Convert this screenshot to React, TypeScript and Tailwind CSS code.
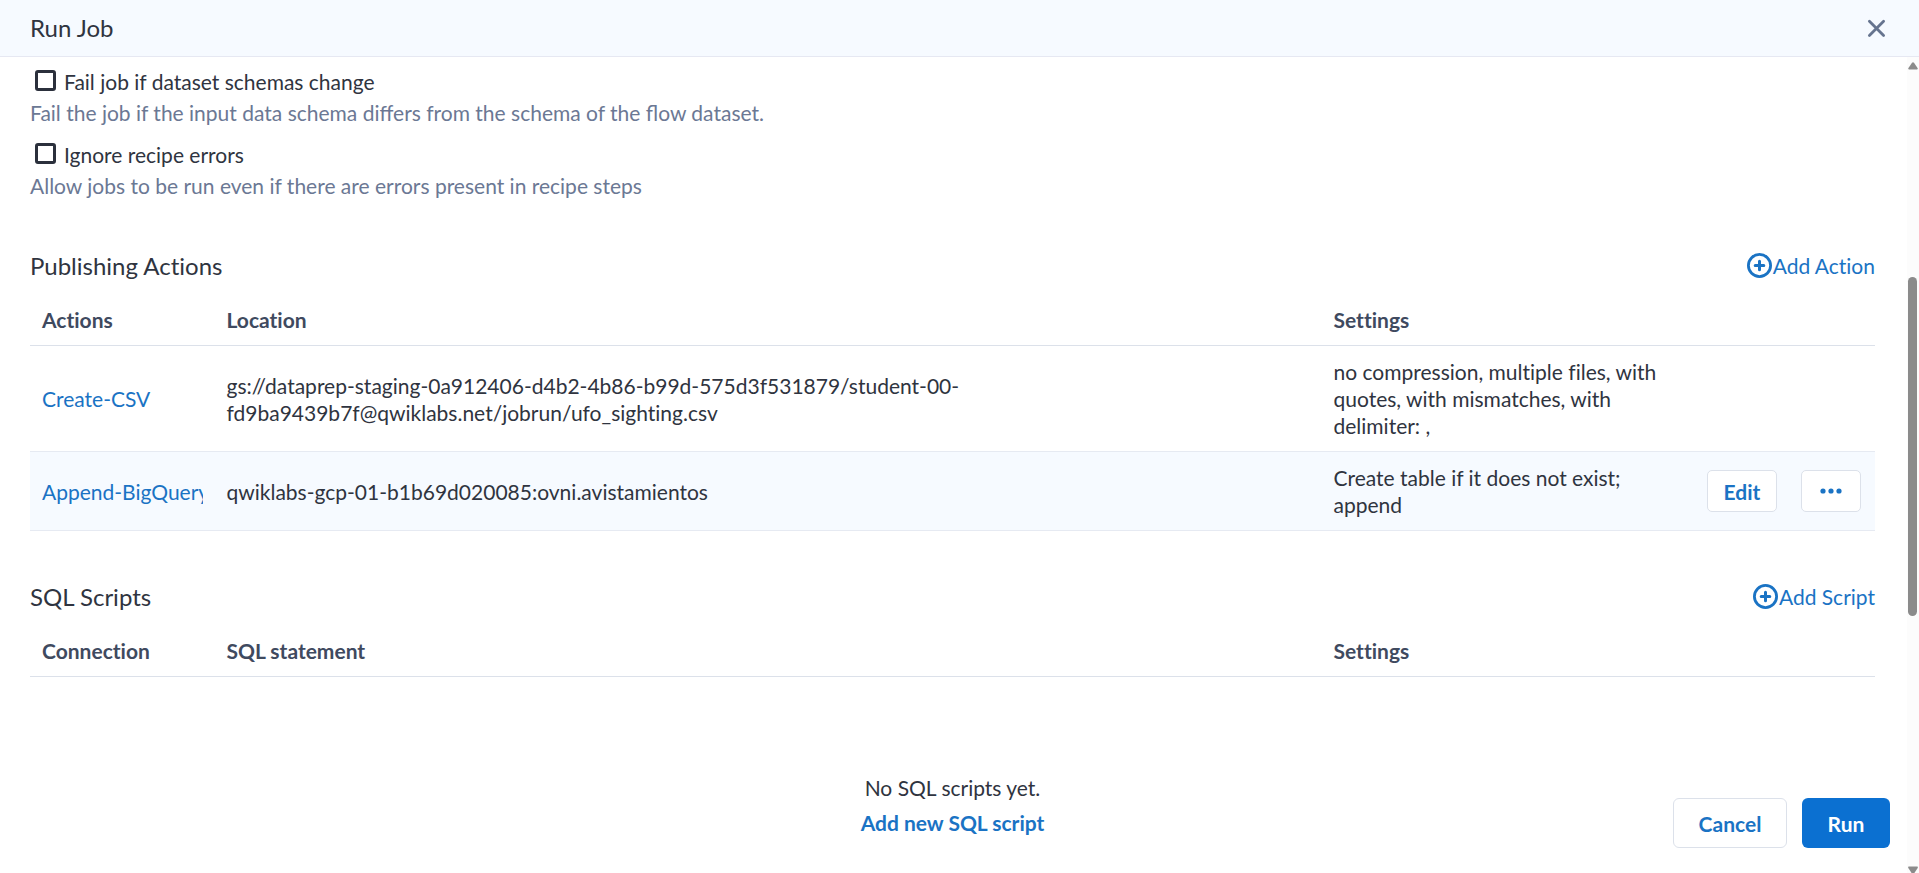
import type { ReactNode } from "react";

const actions = [
  {
    name: "Create-CSV",
    location:
      "gs://dataprep-staging-0a912406-d4b2-4b86-b99d-575d3f531879/student-00-fd9ba9439b7f@qwiklabs.net/jobrun/ufo_sighting.csv",
    settings: "no compression, multiple files, with quotes, with mismatches, with delimiter: ,",
    active: false,
  },
  {
    name: "Append-BigQuery",
    location: "qwiklabs-gcp-01-b1b69d020085:ovni.avistamientos",
    settings: "Create table if it does not exist; append",
    active: true,
  },
];

function Option({ id, label, hint }: { id: string; label: string; hint: string }) {
  return (
    <div>
      <div className="flex items-start gap-2 pl-[5px]">
        <input
          id={id}
          type="checkbox"
          aria-describedby={`${id}-hint`}
          className="mt-0.5 size-[21px] shrink-0 appearance-none rounded-[3px] border-3 border-[#2b303c] bg-white checked:bg-[#2b303c]"
        />
        <label htmlFor={id}>{label}</label>
      </div>
      <p id={`${id}-hint`} className="mt-1 text-[#6b7894] [font-variant-ligatures:common-ligatures]">
        {hint}
      </p>
    </div>
  );
}

function SectionHeader({ title, action }: { title: string; action: string }) {
  return (
    <div className="flex items-center justify-between">
      <h2 className="text-2xl">{title}</h2>
      <button type="button" className="flex items-center gap-px pb-0.5 text-[#1a73c4]">
        <svg viewBox="0 0 25 25" className="size-[25px]" fill="none" stroke="currentColor" aria-hidden="true">
          <circle cx="12.5" cy="12.5" r="11.1" strokeWidth="2.8" />
          <path d="M12.5 8.2v8.6M8.2 12.5h8.6" strokeWidth="3" strokeLinecap="round" />
        </svg>
        {action}
      </button>
    </div>
  );
}

function DataTable({ heads, children }: { heads: string[]; children?: ReactNode }) {
  return (
    <table className="mt-3 w-full table-fixed border-collapse text-left">
      <colgroup>
        <col className="w-[10%]" />
        <col className="w-[60%]" />
        <col className="w-[20%]" />
        <col className="w-[10%]" />
      </colgroup>
      <thead>
        <tr className="border-b border-[#dce1ea] text-[#3f4a5f]">
          {heads.map((head) => (
            <th key={head} scope="col" className="p-3 font-bold">
              {head}
            </th>
          ))}
          <td />
        </tr>
      </thead>
      <tbody>{children}</tbody>
    </table>
  );
}

export default function App() {
  return (
    <div className="flex h-screen flex-col overflow-hidden bg-white font-['Lato',sans-serif] text-[21px] leading-[27px] text-[#2f3440] [font-variant-ligatures:no-common-ligatures]">
      <header className="flex h-[57px] shrink-0 items-center justify-between border-b border-[#e6e8f2] bg-[#f6faff] pr-8 pl-[30px]">
        <h1 className="text-2xl">Run Job</h1>
        <button type="button" aria-label="Close" className="text-[#66748f]">
          <svg viewBox="0 0 20 20" className="size-5" fill="none" stroke="currentColor" strokeWidth="2.8" strokeLinecap="round" aria-hidden="true">
            <path d="M2.4 3.2l14.2 14.2M16.6 3.2L2.4 17.4" />
          </svg>
        </button>
      </header>

      <div className="relative flex min-h-0 flex-1">
        <main className="min-w-0 flex-1 overflow-hidden pt-[11px] pr-8 pl-[30px]">
          <div className="flex flex-col gap-[15px]">
            <Option
              id="schema-change"
              label="Fail job if dataset schemas change"
              hint="Fail the job if the input data schema differs from the schema of the flow dataset."
            />
            <Option
              id="recipe-errors"
              label="Ignore recipe errors"
              hint="Allow jobs to be run even if there are errors present in recipe steps"
            />
          </div>

          <section className="mt-[51px]">
            <SectionHeader title="Publishing Actions" action="Add Action" />
            <DataTable heads={["Actions", "Location", "Settings"]}>
              {actions.map((row) => (
                <tr key={row.name} className={row.active ? "border-b border-[#e6eaf2] bg-[#f6faff]" : "border-b border-[#e6eaf2]"}>
                  <td className="p-3">
                    <a href="#action" className="block overflow-hidden whitespace-nowrap text-[#1a73c4]">
                      {row.name}
                    </a>
                  </td>
                  <td className="p-3">{row.location}</td>
                  <td className="p-3">{row.settings}</td>
                  <td className="pr-3.5">
                    {row.active && (
                      <div className="flex justify-end gap-6">
                        <button type="button" className="h-[42px] w-[70px] rounded-[5px] border border-[#dce1ea] bg-white font-bold text-[#1a73c4]">
                          Edit
                        </button>
                        <button
                          type="button"
                          aria-label="More actions"
                          className="flex h-[42px] w-[60px] items-center justify-center rounded-[5px] border border-[#dce1ea] bg-white text-[#1a73c4]"
                        >
                          <svg viewBox="0 0 22 6" className="h-1.5 w-[22px]" fill="currentColor" aria-hidden="true">
                            <circle cx="3" cy="3" r="2.6" />
                            <circle cx="11" cy="3" r="2.6" />
                            <circle cx="19" cy="3" r="2.6" />
                          </svg>
                        </button>
                      </div>
                    )}
                  </td>
                </tr>
              ))}
            </DataTable>
          </section>

          <section className="mt-[50px]">
            <SectionHeader title="SQL Scripts" action="Add Script" />
            <DataTable heads={["Connection", "SQL statement", "Settings"]} />
            <div className="mt-[97px] flex flex-col items-center gap-2">
              <p>No SQL scripts yet.</p>
              <button type="button" className="font-bold text-[#1a73c4]">
                Add new SQL script
              </button>
            </div>
          </section>
        </main>

        <div className="flex w-3 shrink-0 flex-col items-start bg-[#fcfcfc] pt-[5px] pl-px" aria-hidden="true">
          <svg viewBox="0 0 10 8" className="h-2 w-2.5 shrink-0" fill="#8b8b8b">
            <path d="M4 .8Q5 -.4 6 .8L9.7 6.2Q10 7.4 8.8 7.4H1.2Q0 7.4 .3 6.2Z" />
          </svg>
          <div className="mt-[207px] h-[339px] w-[9px] shrink-0 rounded-full bg-[#8b8b8b]" />
          <svg viewBox="0 0 10 8" className="mt-auto h-2 w-2.5 shrink-0" fill="#8b8b8b">
            <path d="M.5 1.6h9q.6 .6 .2 1.4L6.4 8H3.6L.3 3Q-.1 2.2 .5 1.6Z" />
          </svg>
        </div>

        <div className="absolute right-[29px] bottom-[25px] flex gap-[15px] font-bold">
          <button type="button" className="h-[50px] w-[114px] rounded-md border border-[#dce1ea] bg-white text-[#1a73c4]">
            Cancel
          </button>
          <button type="button" className="h-[50px] w-[88px] rounded-md bg-[#0b70d1] text-white">
            Run
          </button>
        </div>
      </div>
    </div>
  );
}
